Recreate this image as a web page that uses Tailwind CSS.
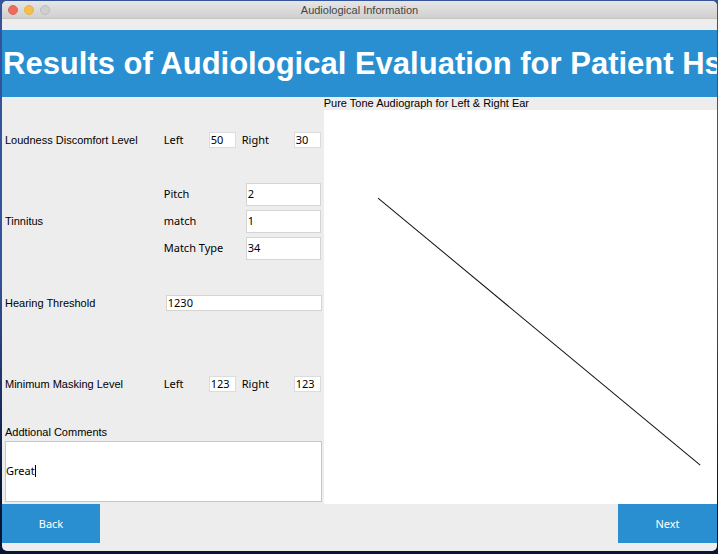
<!DOCTYPE html>
<html lang="en">
<head>
<meta charset="utf-8">
<meta name="viewport" content="width=device-width, initial-scale=1">
<title>Audiological Information</title>
<script src="https://cdn.jsdelivr.net/npm/@tailwindcss/browser@4"></script>
</head>
<body class="bg-linear-to-b from-[#35539a] from-50% to-[#071636] to-90%">
<div class="flex min-h-screen flex-col pt-px pr-px pb-[3px] pl-[2px] font-['Noto_Sans',sans-serif] text-[11px] leading-4 text-black">
  <div class="flex flex-1 flex-col overflow-hidden rounded-[5px] bg-[#ededed]">
    <header class="grid h-[18px] shrink-0 grid-cols-[1fr_auto_1fr] items-center border-b border-[#c4c4c4] bg-linear-to-b from-[#e6e6e6] to-[#d0d0d0] px-[6px]">
      <div class="flex gap-[6px]">
        <button type="button" aria-label="Close" class="size-[10px] rounded-full border border-[#e0645c] bg-[#ec6a5e]"></button>
        <button type="button" aria-label="Minimize" class="size-[10px] rounded-full border border-[#e6b046] bg-[#f5bf4f]"></button>
        <button type="button" aria-label="Zoom" class="size-[10px] rounded-full border border-[#bcbcbc] bg-[#cfcfcf]"></button>
      </div>
      <span class="font-['Liberation_Sans',sans-serif] text-[11px] text-[#444444]">Audiological Information</span>
    </header>

    <h1 class="mt-[11px] flex h-[67px] shrink-0 items-center overflow-hidden bg-[#298fd1] pl-px font-['Liberation_Sans',sans-serif] text-[31px] font-bold whitespace-nowrap text-white">Results of Audiological Evaluation for Patient Hs</h1>

    <main class="grid flex-1 grid-cols-[45fr_55fr]">
      <form class="flex flex-col pt-[2px] pr-[2px] pb-[2px] pl-[3px]">
        <div class="grid flex-1 auto-rows-fr grid-cols-[1fr_158px] items-center">
          <span class="font-['Liberation_Sans',sans-serif]" id="ldl">Loudness Discomfort Level</span>
          <div role="group" aria-labelledby="ldl" class="flex items-center">
            <label for="ldl-l" class="w-[45px]">Left</label>
            <input id="ldl-l" value="50" class="h-4 w-[27px] border border-[#dcdcdc] bg-white pl-px">
            <label for="ldl-r" class="ml-[6px] flex-1">Right</label>
            <input id="ldl-r" value="30" class="mr-px h-4 w-[27px] border border-[#dcdcdc] bg-white pl-px">
          </div>

          <span class="font-['Liberation_Sans',sans-serif]" id="tin">Tinnitus</span>
          <div role="group" aria-labelledby="tin" class="grid grid-cols-[1fr_75px] items-center gap-y-[4px] pr-px">
            <label for="pitch">Pitch</label>
            <input id="pitch" value="2" class="h-[23px] w-full border border-[#d4d4d4] bg-white pb-px pl-px">
            <label for="match">match</label>
            <input id="match" value="1" class="h-[23px] w-full border border-[#d4d4d4] bg-white pb-px pl-px">
            <label for="type">Match Type</label>
            <input id="type" value="34" class="h-[23px] w-full border border-[#d4d4d4] bg-white pb-px pl-px">
          </div>

          <label for="threshold" class="font-['Liberation_Sans',sans-serif]">Hearing Threshold</label>
          <div class="pl-[2px]">
            <input id="threshold" value="1230" class="block h-4 w-full border border-[#d4d4d4] bg-white pl-px">
          </div>

          <span class="font-['Liberation_Sans',sans-serif]" id="mml">Minimum Masking Level</span>
          <div role="group" aria-labelledby="mml" class="flex items-center">
            <label for="mml-l" class="w-[45px]">Left</label>
            <input id="mml-l" value="123" class="h-4 w-[27px] border border-[#dcdcdc] bg-white pl-px">
            <label for="mml-r" class="ml-[6px] flex-1">Right</label>
            <input id="mml-r" value="123" class="mr-px h-4 w-[27px] border border-[#dcdcdc] bg-white pl-px">
          </div>
        </div>
        <label for="comments" class="pb-[2px] font-['Liberation_Sans',sans-serif] leading-[14px]">Addtional Comments</label>
        <div class="relative">
          <input id="comments" value="Great" class="block h-[61px] w-full border border-[#a9cfec] bg-white pb-[2px]">
          <span aria-hidden="true" class="absolute top-6 left-[30px] h-3 w-px bg-black"></span>
        </div>
      </form>

      <figure class="flex flex-col">
        <figcaption class="h-[13px] font-['Liberation_Sans',sans-serif] leading-[13px]">Pure Tone Audiograph for Left &amp; Right Ear</figcaption>
        <div class="flex flex-1 bg-white">
          <svg class="w-full flex-1" viewBox="0 0 393 394" preserveAspectRatio="none" role="img" aria-label="Audiograph line">
            <path d="M54 88 L376 355" fill="none" stroke="#111" stroke-width="1"/>
          </svg>
        </div>
      </figure>
    </main>

    <footer class="flex shrink-0 justify-between pb-2 text-white">
      <button type="button" class="h-[39px] w-[98px] bg-[#298fd1]">Back</button>
      <button type="button" class="h-[39px] w-[99px] bg-[#298fd1]">Next</button>
    </footer>
  </div>
</div>
</body>
</html>
